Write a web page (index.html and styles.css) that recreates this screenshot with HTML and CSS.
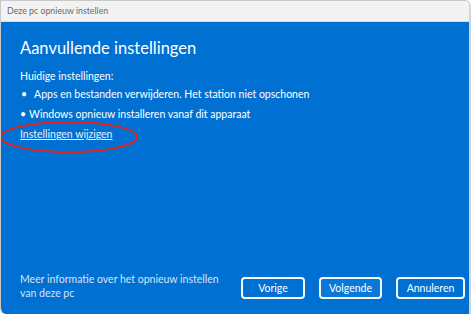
FILE: index.html
```html
<!DOCTYPE html>
<html lang="nl">
<head>
  <meta charset="UTF-8">
  <title>Deze pc opnieuw instellen</title>
  <link rel="stylesheet" href="styles.css">
</head>
<body>
  <div class="window">
    <div class="titlebar">Deze pc opnieuw instellen</div>
    <div class="content">
      <h1>Aanvullende instellingen</h1>
      <p class="label">Huidige instellingen:</p>
      <ul class="settings">
        <li class="first">Apps en bestanden verwijderen. Het station niet opschonen</li>
        <li>Windows opnieuw installeren vanaf dit apparaat</li>
      </ul>
      <div class="change">
        <a href="#">Instellingen wijzigen</a>
        <!-- red annotation ring -->
        <svg class="ring" width="140" height="34" viewBox="0 0 140 34">
          <ellipse cx="69" cy="17" rx="68" ry="15" fill="none" stroke="#e8231b" stroke-width="2"/>
        </svg>
      </div>
      <div class="footer">
        <p class="more">Meer informatie over het opnieuw instellen van deze pc</p>
        <div class="buttons">
          <button class="btn w64">Vorige</button>
          <button class="btn w63 primary">Volgende</button>
          <button class="btn w69">Annuleren</button>
        </div>
      </div>
    </div>
  </div>
</body>
</html>
```

FILE: styles.css
```css
body {
  margin: 0;
  background: #ffffff;
  font-family: 'Lato', 'Open Sans', sans-serif;
}
.window {
  width: 471px;
  height: 314px;
  display: flex;
  flex-direction: column;
  border: 1px solid #c8c8c8;
  border-right: 2px solid #d4d4d4;
  border-bottom: none;
  border-radius: 0 6px 0 6px;
  overflow: hidden;
  box-sizing: border-box;
}
.titlebar {
  height: 20px;
  background: #f3f3f3;
  border-bottom: 1px solid #d9d9d9;
  color: #6a6a6a;
  font-size: 8.8px;
  line-height: 20px;
  padding-left: 6px;
}
.content {
  flex: 1;
  background: #0071d3;
  color: #ffffff;
  padding: 13px 0 0 19px;
  display: flex;
  flex-direction: column;
}
h1 {
  margin: 0;
  font-size: 16.5px;
  font-weight: 400;
  line-height: 26px;
}
.label {
  margin: 7px 0 0;
  font-size: 10.5px;
  line-height: 16px;
}
.settings {
  list-style: none;
  margin: 2px 0 0;
  padding: 0;
  font-size: 10.5px;
  line-height: 16px;
}
.settings li {
  margin-bottom: 4px;
}
.settings li::before {
  content: "\2022";
  margin-right: 3px;
}
.settings li.first::before {
  margin-right: 7px;
  margin-left: 1px;
}
.change {
  position: relative;
  font-size: 10.5px;
  line-height: 16px;
}
.change a {
  color: #e6effa;
  text-decoration: underline;
}
.ring {
  position: absolute;
  left: -20px;
  top: -6px;
}
.footer {
  margin-top: auto;
  display: flex;
  align-items: flex-end;
  padding-bottom: 14px;
}
.more {
  margin: 0;
  width: 205px;
  font-size: 10.5px;
  line-height: 14px;
  color: #d3e4f7;
}
.buttons {
  display: flex;
  gap: 14px;
  margin-left: auto;
  margin-right: 4px;
  margin-bottom: 1px;
}
.btn {
  height: 22px;
  border: 2px solid #f4f8fd;
  border-radius: 4px;
  background: #0071d3;
  color: #ffffff;
  font-family: inherit;
  font-size: 10.5px;
  padding: 0;
}
.btn.primary {
  background: #0a78d8;
}
.w64 { width: 64px; }
.w63 { width: 63px; }
.w69 { width: 69px; }
```
